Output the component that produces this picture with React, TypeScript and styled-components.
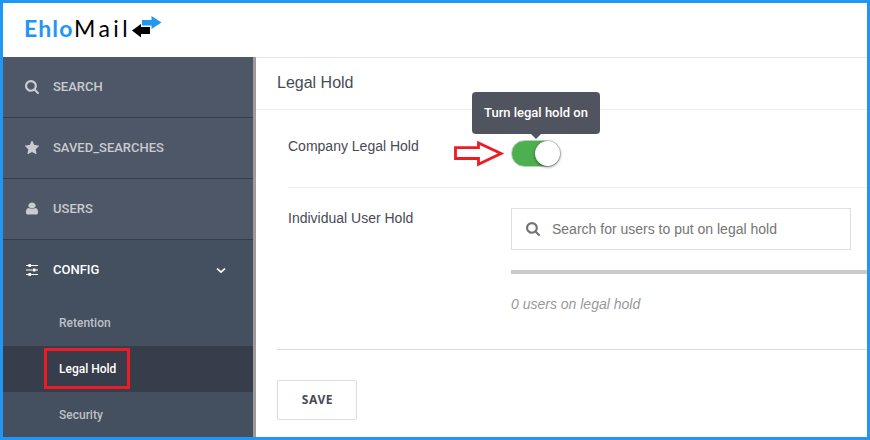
import React from "react";
import styled, { createGlobalStyle } from "styled-components";

const GlobalStyle = createGlobalStyle`
  * { box-sizing: border-box; }
  body { margin: 0; overflow: hidden; font-family: Roboto, "Liberation Sans", sans-serif; }
`;

const Frame = styled.div`
  width: 870px;
  height: 440px;
  border: 3px solid #2196f3;
  background: #fff;
  display: flex;
  flex-direction: column;
  overflow: hidden;
`;

const Header = styled.header`
  height: 54px;
  flex: none;
  display: flex;
  align-items: flex-start;
  padding: 9px 0 0 21px;
`;

const Brand = styled.span<{ $strong?: boolean }>`
  width: ${(p) => (p.$strong ? "50px" : "57px")};
  font-family: Lato, sans-serif;
  font-size: 23px;
  line-height: 32px;
  font-weight: ${(p) => (p.$strong ? 700 : 400)};
  letter-spacing: ${(p) => (p.$strong ? "1.1px" : "3.4px")};
  color: ${(p) => (p.$strong ? "#2196f3" : "#000")};
  white-space: nowrap;
`;

const BrandArrows = styled.svg`
  width: 30px;
  height: 22px;
  margin-top: 4px;
  margin-left: 1px;
  flex: none;
`;

const Body = styled.div`
  display: flex;
  flex: 1;
  min-height: 0;
`;

const Sidebar = styled.nav`
  width: 253px;
  flex: none;
  border-right: 3px solid #9e9b98;
  background: #444f5f;
  overflow: hidden;
`;

const NavItem = styled.div<{ $open?: boolean }>`
  height: ${(p) => (p.$open ? "60px" : "61px")};
  padding: 0 25px 1px 22px;
  display: flex;
  align-items: center;
  background: ${(p) => (p.$open ? "#444f5f" : "#4e5767")};
  border-bottom: ${(p) => (p.$open ? "none" : "1px solid #373c49")};
  color: ${(p) => (p.$open ? "#fff" : "#c8cbd0")};
`;

const Glyph = styled.svg`
  width: 14px;
  height: 14px;
  flex: none;
  fill: currentColor;
`;

const NavLabel = styled.span`
  flex: 1;
  margin-left: 14px;
  font-size: 13px;
  font-weight: 500;
`;

const SubItem = styled.div<{ $active?: boolean }>`
  height: 46px;
  padding-left: 56px;
  display: flex;
  align-items: center;
  font-size: 12px;
  font-weight: 500;
  background: ${(p) => (p.$active ? "#373d4a" : "#444f5f")};
  color: ${(p) => (p.$active ? "#fff" : "#bdc1c7")};
`;

const Highlight = styled.span`
  border: 3px solid #ed1c24;
  width: 86px;
  height: 41px;
  margin-left: -15px;
  margin-top: -2px;
  padding: 2px 0 0 12px;
  display: flex;
  align-items: center;
  white-space: nowrap;
`;

const Main = styled.main`
  flex: 1;
  min-width: 0;
  border-top: 1px solid #e2e2ec;
  font-family: "Liberation Sans", Arial, sans-serif;
  color: #474b55;
`;

const Title = styled.h1`
  margin: 0;
  height: 52px;
  padding-left: 21px;
  border-bottom: 1px solid #eee;
  font-size: 16px;
  line-height: 50px;
  font-weight: 400;
`;

const Row = styled.section<{ $last?: boolean }>`
  height: ${(p) => (p.$last ? "161px" : "78px")};
  margin-left: 32px;
  border-bottom: ${(p) => (p.$last ? "none" : "1px solid #eee")};
  display: flex;
  font-size: 14px;
`;

const Label = styled.div<{ $top: number }>`
  width: 223px;
  flex: none;
  padding-top: ${(p) => p.$top}px;
  line-height: 20px;
`;

const ToggleWrap = styled.div`
  position: relative;
  width: 50px;
  height: 27px;
  margin-top: 30px;
`;

const Toggle = styled.div`
  width: 50px;
  height: 27px;
  border-radius: 14px;
  border: 1px solid #b9cdbb;
  background: linear-gradient(90deg, #4caf50 36px, #fff 36px);
  display: flex;
  justify-content: flex-end;
`;

const Knob = styled.div`
  width: 25px;
  height: 25px;
  border-radius: 50%;
  background: #fff;
  box-shadow: 0 1px 3px rgba(0, 0, 0, 0.5);
`;

const Tooltip = styled.div`
  position: absolute;
  left: -39px;
  top: -48px;
  width: 128px;
  height: 42px;
  border-radius: 4px;
  background: #50545f;
  color: #fff;
  text-align: center;
  font: 500 13px/42px Roboto, sans-serif;
  white-space: nowrap;

  &::after {
    content: "";
    position: absolute;
    left: 59px;
    top: 42px;
    border: 5px solid transparent;
    border-top-color: #50545f;
    border-bottom: 0;
  }
`;

const Pointer = styled.svg`
  position: absolute;
  left: -58px;
  top: 0;
  width: 52px;
  height: 27px;
`;

const HoldColumn = styled.div`
  flex: 1;
  padding-top: 20px;
`;

const SearchBox = styled.div`
  width: 340px;
  height: 42px;
  border: 1px solid #dbe0e6;
  padding-left: 14px;
  display: flex;
  align-items: center;
  color: #757575;
`;

const Placeholder = styled.span`
  margin-left: 12px;
  white-space: nowrap;
`;

const Bar = styled.div`
  height: 4px;
  margin-top: 20px;
  background: #cacaca;
`;

const Count = styled.div`
  margin-top: 20px;
  line-height: 20px;
  font-style: italic;
  color: #999;
`;

const Footer = styled.footer`
  margin-left: 21px;
  padding-top: 30px;
  border-top: 1px solid #ddd;
`;

const SaveButton = styled.button`
  display: block;
  width: 80px;
  height: 40px;
  padding: 0 0 2px 1px;
  border: 1px solid #ddd;
  border-radius: 2px;
  background: #fff;
  color: #474b55;
  font: 700 12px "Noto Sans", sans-serif;
  letter-spacing: 0.6px;
`;

const SEARCH =
  "M1216 832q0-185-131.5-316.5t-316.5-131.5-316.5 131.5-131.5 316.5 131.5 316.5 316.5 131.5 316.5-131.5 131.5-316.5zm512 832q0 52-38 90t-90 38q-54 0-90-38l-343-342q-179 124-399 124-143 0-273.5-55.5t-225-150-150-225-55.5-273.5 55.5-273.5 150-225 225-150 273.5-55.5 273.5 55.5 225 150 150 225 55.5 273.5q0 220-124 399l343 343q37 37 37 90z";
const STAR =
  "M1728 647q0 22-26 48l-363 354 86 500q1 7 1 20 0 21-10.5 35.5t-30.5 14.5q-19 0-40-12l-449-236-449 236q-22 12-40 12-21 0-31.5-14.5t-10.5-35.5q0-6 2-20l86-500-364-354q-25-27-25-48 0-37 56-46l502-73 225-455q19-41 49-41t49 41l225 455 502 73q56 9 56 46z";
const USER =
  "M1536 1399q0 109-62.5 187t-150.5 78h-854q-88 0-150.5-78t-62.5-187q0-85 8.5-160.5t31.5-152 58.5-131 94-89 134.5-34.5q131 128 313 128t313-128q76 0 134.5 34.5t94 89 58.5 131 31.5 152 8.5 160.5zm-256-887q0 159-112.5 271.5t-271.5 112.5-271.5-112.5-112.5-271.5 112.5-271.5 271.5-112.5 271.5 112.5 112.5 271.5z";

const SEARCH_BOX = "64 128 1664 1664";

const navItems = [
  { label: "SEARCH", path: SEARCH, box: SEARCH_BOX },
  { label: "SAVED_SEARCHES", path: STAR, box: "64 64 1664 1664" },
  { label: "USERS", path: USER, box: "160 64 1472 1792" },
];

export default function App() {
  return (
    <>
      <GlobalStyle />
      <Frame>
        <Header>
          <Brand $strong>Ehlo</Brand>
          <Brand>Mail</Brand>
          <BrandArrows viewBox="0 0 30 22">
            <path d="M10 4H19.500V0L29.500 6.500L19.500 13V9.500H10z" fill="#2196f3" />
            <path d="M18 11V18H9V21.500L0 14.500L9 8V11z" fill="#000" />
          </BrandArrows>
        </Header>
        <Body>
          <Sidebar>
            {navItems.map((item) => (
              <NavItem key={item.label}>
                <Glyph viewBox={item.box} preserveAspectRatio="none">
                  <path d={item.path} />
                </Glyph>
                <NavLabel>{item.label}</NavLabel>
              </NavItem>
            ))}
            <NavItem $open>
              <Glyph viewBox="0 0 14 14">
                <path d="M1 2h12v1H1zM1 6.500h12v1H1zM1 11h12v1H1zM3.500 1h2.500v3H3.500zM8 5.500h2.500v3H8zM3.500 10h2.500v3H3.500z" />
              </Glyph>
              <NavLabel>CONFIG</NavLabel>
              <Glyph viewBox="0 0 14 14">
                <path
                  d="M3 5.500L7 9.200L11 5.500"
                  fill="none"
                  stroke="currentColor"
                  strokeWidth="1.700"
                />
              </Glyph>
            </NavItem>
            <SubItem>Retention</SubItem>
            <SubItem $active>
              <Highlight>Legal Hold</Highlight>
            </SubItem>
            <SubItem>Security</SubItem>
          </Sidebar>
          <Main>
            <Title>Legal Hold</Title>
            <Row>
              <Label $top={26}>Company Legal Hold</Label>
              <ToggleWrap>
                <Pointer viewBox="0 0 52 27">
                  <path
                    d="M2.500 7.700H25.500V3L48 13.500L25.500 24.200V18.500H2.500z"
                    fill="none"
                    stroke="#ed1c24"
                    strokeWidth="2.800"
                  />
                </Pointer>
                <Toggle>
                  <Knob />
                </Toggle>
                <Tooltip>Turn legal hold on</Tooltip>
              </ToggleWrap>
            </Row>
            <Row $last>
              <Label $top={20}>Individual User Hold</Label>
              <HoldColumn>
                <SearchBox>
                  <Glyph viewBox={SEARCH_BOX}>
                    <path d={SEARCH} />
                  </Glyph>
                  <Placeholder>Search for users to put on legal hold</Placeholder>
                </SearchBox>
                <Bar />
                <Count>0 users on legal hold</Count>
              </HoldColumn>
            </Row>
            <Footer>
              <SaveButton>SAVE</SaveButton>
            </Footer>
          </Main>
        </Body>
      </Frame>
    </>
  );
}
